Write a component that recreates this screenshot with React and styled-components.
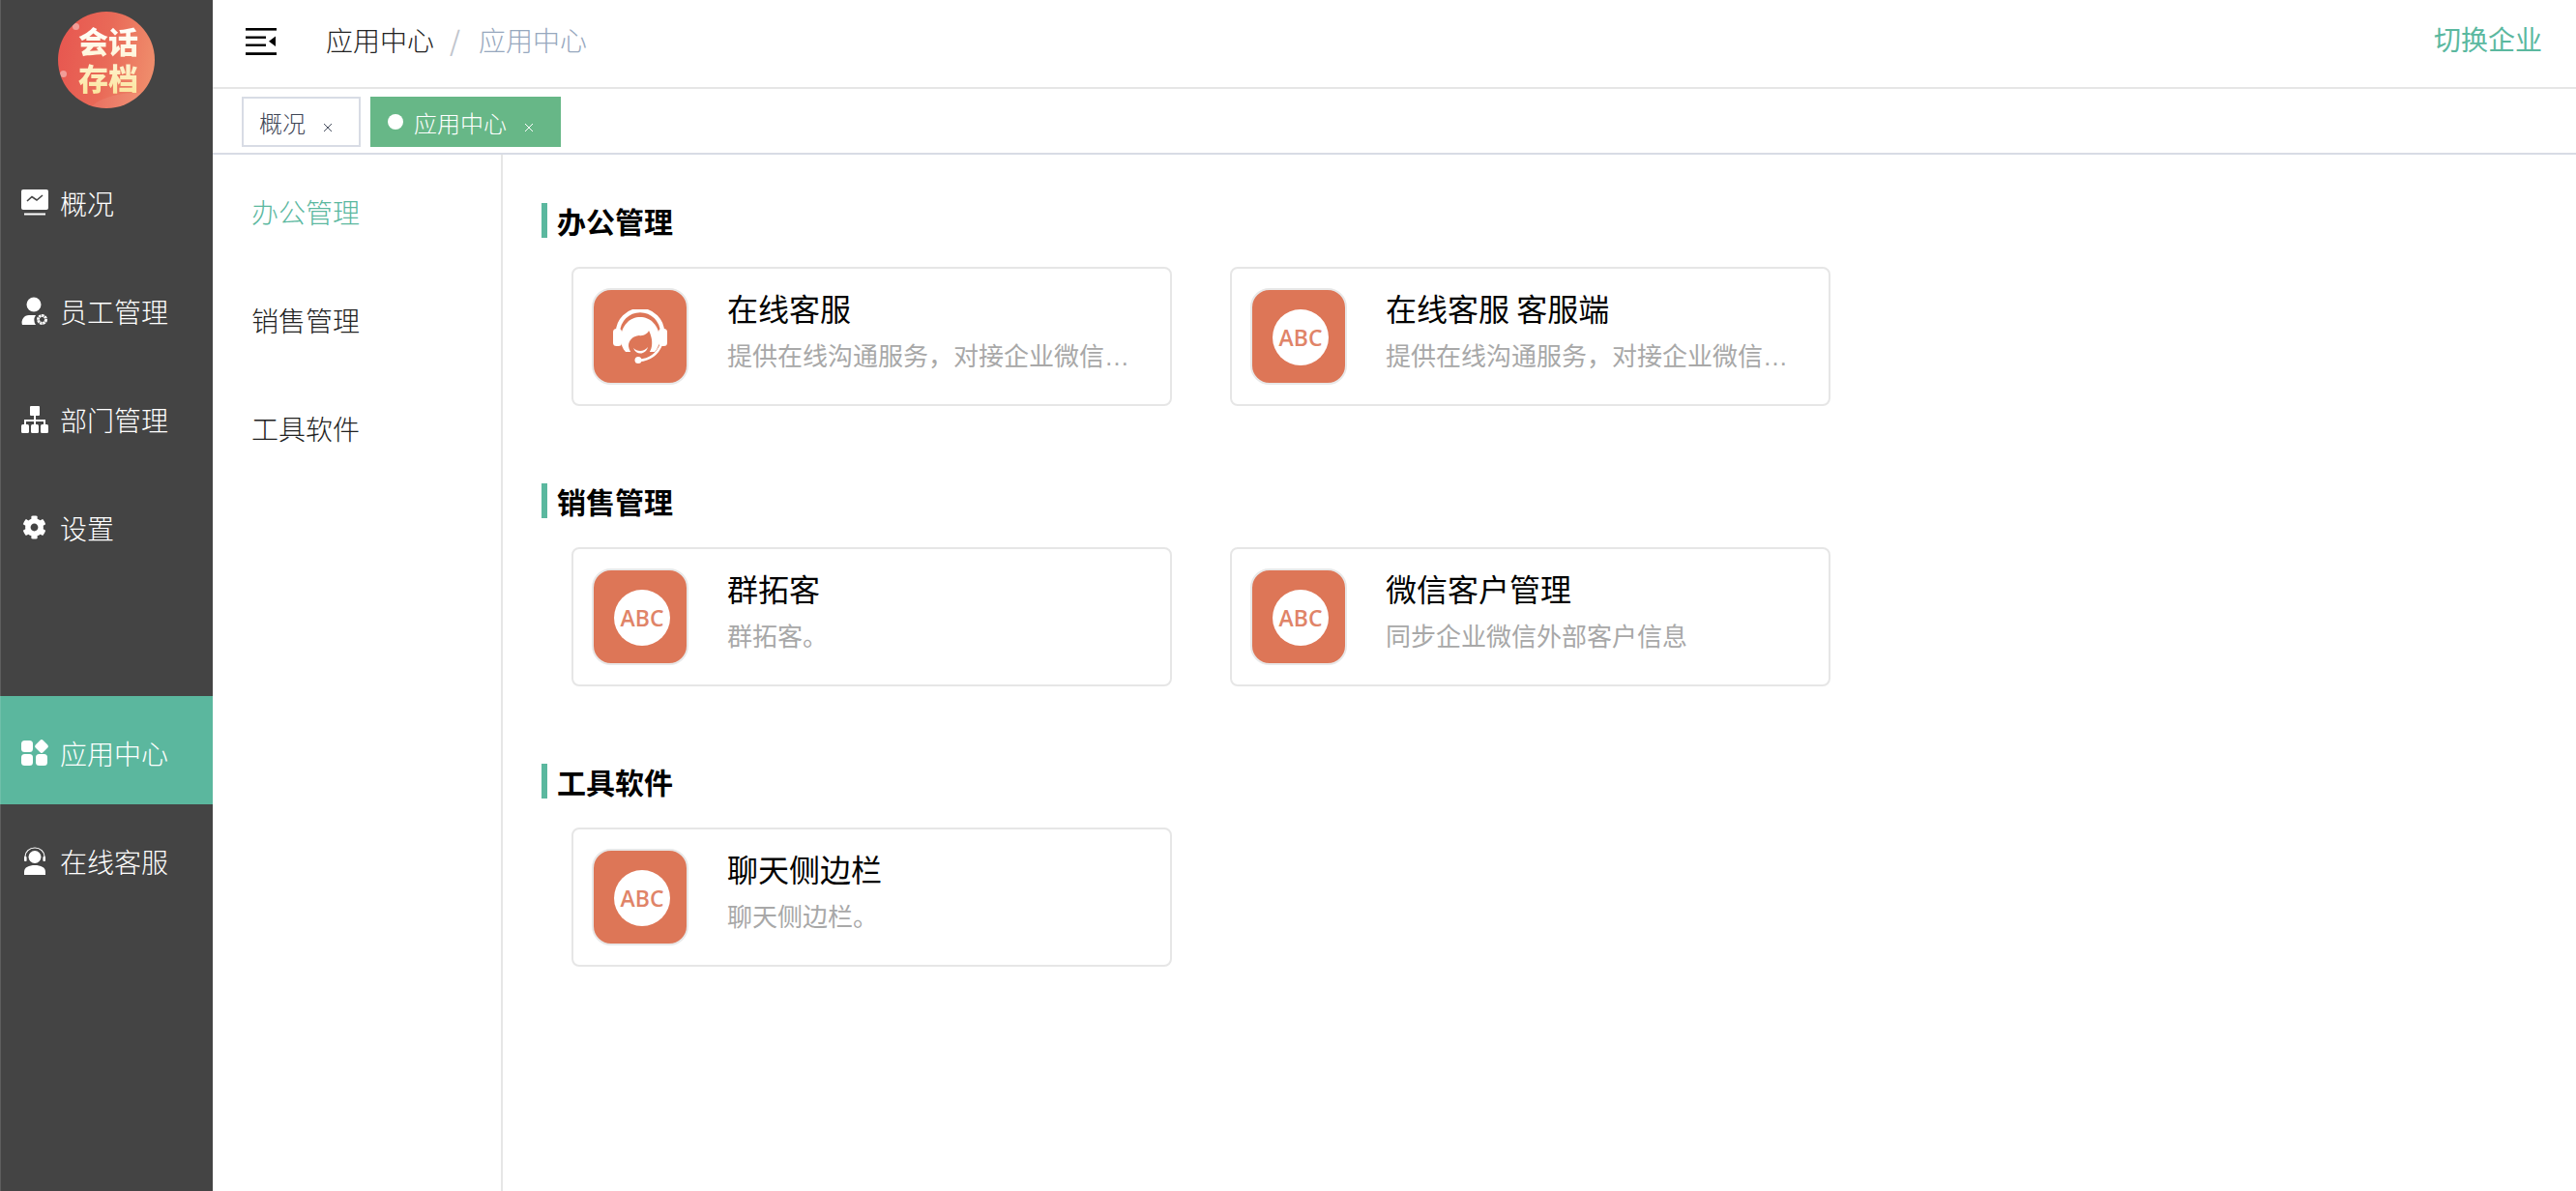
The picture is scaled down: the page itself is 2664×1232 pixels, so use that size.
import React from "react";
import styled, { createGlobalStyle } from "styled-components";
import { FaCog } from "react-icons/fa";

const Global = createGlobalStyle`
  html, body { margin: 0; padding: 0; background: #fff; }
  * { box-sizing: border-box; }
  body { font-family: "Noto Sans CJK SC", "Noto Sans", sans-serif; }
`;

const Page = styled.div`
  display: flex;
  width: 2664px;
  height: 1232px;
  overflow: hidden;
`;

const Sidebar = styled.aside`
  width: 220px;
  flex: none;
  background: #444444;
  border-left: 1px solid #5e5e5e;
  display: flex;
  flex-direction: column;
`;

const LogoWrap = styled.div`
  height: 151px;
  padding: 12px 0 0 59px;
`;

const Logo = styled.div`
  position: relative;
  width: 100px;
  height: 100px;
  border-radius: 50%;
  overflow: hidden;
  background: linear-gradient(100deg, #e7554f 0%, #e96a58 50%, #f0936f 100%);
  display: flex;
  align-items: center;
  justify-content: center;
  padding: 0 0 3px 4px;
  &::after {
    content: "";
    position: absolute;
    left: 30px;
    bottom: -34px;
    width: 100px;
    height: 50px;
    border-radius: 50%;
    background: rgba(255, 255, 255, 0.07);
  }
`;

const LogoDot = styled.span`
  position: absolute;
  left: ${(p) => p.$x}px;
  top: ${(p) => p.$y}px;
  width: 7px;
  height: 7px;
  border-radius: 50%;
  background: rgba(255, 255, 255, 0.4);
`;

const LogoText = styled.div`
  position: relative;
  z-index: 1;
  width: 64px;
  font-size: 31px;
  line-height: 38px;
  font-weight: 900;
  text-align: center;
  background: linear-gradient(180deg, #ffffff 0%, #fff6dc 45%, #fbe49a 100%);
  -webkit-background-clip: text;
  background-clip: text;
  color: transparent;
`;

const NavList = styled.nav`
  display: flex;
  flex-direction: column;
`;

const NavItem = styled.div`
  height: 112px;
  padding: 5px 0 0 20px;
  display: flex;
  align-items: center;
  gap: 12px;
  color: #fff;
  font-size: 28px;
  font-weight: 300;
`;

const ActiveNavItem = styled(NavItem)`
  background: #5bb79e;
  margin-top: ${(p) => p.$gap}px;
  margin-left: -1px;
  padding-left: 21px;
  box-shadow: inset 1px 0 0 rgba(255, 255, 255, 0.12);
`;

const NavIcon = styled.span`
  width: 29px;
  height: 29px;
  flex: none;
  display: flex;
  align-items: center;
  justify-content: center;
  color: #fff;
  svg { display: block; }
`;

const Main = styled.div`
  flex: 1;
  min-width: 0;
  display: flex;
  flex-direction: column;
`;

const Header = styled.header`
  height: 92px;
  flex: none;
  border-bottom: 2px solid #e6e6e6;
  padding: 0 35px 8px 34px;
  display: flex;
  align-items: center;
`;

const Burger = styled.div`
  width: 32px;
  height: 28px;
  margin: 4px 51px 0 0;
  svg { display: block; }
`;

const Crumb = styled.span`
  font-size: 28px;
  font-weight: 300;
  color: ${(p) => (p.$muted ? "#97a8be" : "#222")};
`;

const CrumbSep = styled.span`
  font-size: 28px;
  color: #c0c4cc;
  margin: 0 19px 0 16px;
  font-weight: 400;
`;

const Switch = styled.span`
  margin: 0 0 2px auto;
  color: #5bb89f;
  font-size: 28px;
  font-weight: 400;
`;

const Tabs = styled.div`
  height: 68px;
  flex: none;
  border-bottom: 2px solid #d8dce5;
  padding: 8px 0 0 30px;
  display: flex;
  align-items: flex-start;
  gap: 10px;
`;

const Tab = styled.div`
  height: 52px;
  display: flex;
  align-items: center;
  font-size: 24px;
  font-weight: 300;
  padding: ${(p) => (p.$active ? "0 0 0 18px" : "0 0 0 16px")};
  width: ${(p) => (p.$active ? "197px" : "123px")};
  background: ${(p) => (p.$active ? "#67b787" : "#fff")};
  color: ${(p) => (p.$active ? "#fff" : "#3f4656")};
  border: ${(p) => (p.$active ? "none" : "2px solid #d8dce5")};
`;

const TabDot = styled.span`
  width: 16px;
  height: 16px;
  border-radius: 50%;
  background: #fff;
  margin-right: 11px;
  flex: none;
`;

const TabClose = styled.span`
  width: 12px;
  height: 12px;
  margin-left: 17px;
  margin-top: 12px;
  svg { display: block; }
`;

const Body = styled.div`
  flex: 1;
  min-height: 0;
  display: flex;
`;

const SubMenu = styled.div`
  width: 300px;
  flex: none;
  border-right: 2px solid #e6e6e6;
  padding: 3px 0 0 40px;
`;

const SubItem = styled.div`
  height: 112px;
  display: flex;
  align-items: center;
  font-size: 28px;
  font-weight: 300;
  color: ${(p) => (p.$active ? "#5bb89f" : "#222")};
`;

const Content = styled.div`
  flex: 1;
  padding: 50px 0 0 40px;
`;

const Section = styled.section`
  margin-bottom: 80px;
`;

const Heading = styled.h2`
  margin: 0 0 30px;
  height: 36px;
  border-left: 6px solid #5bb89f;
  padding-left: 10px;
  font-size: 30px;
  line-height: 36px;
  font-weight: 700;
  color: #000;
`;

const CardRow = styled.div`
  display: flex;
  gap: 60px;
  padding-left: 31px;
`;

const Card = styled.div`
  width: 621px;
  height: 144px;
  border: 2px solid #e6e6e6;
  border-radius: 8px;
  padding: 20px 0 0 19px;
  display: flex;
  align-items: flex-start;
  background: #fff;
`;

const AppIcon = styled.div`
  width: 100px;
  height: 100px;
  flex: none;
  border: 2px solid #e8e8e8;
  border-radius: 20px;
  background: #dd7657;
  display: flex;
  align-items: center;
  justify-content: center;
  margin-right: 40px;
  svg { display: block; }
`;

const AbcBadge = styled.div`
  width: 58px;
  height: 58px;
  margin: 2px 0 0 4px;
  border-radius: 50%;
  background: #fff;
  color: #e08468;
  display: flex;
  align-items: center;
  justify-content: center;
  font-family: "Open Sans", "Noto Sans", sans-serif;
  font-size: 23px;
  font-weight: 600;
`;

const CardText = styled.div`
  width: 440px;
  min-width: 0;
`;

const CardTitle = styled.div`
  font-size: 32px;
  line-height: 44px;
  font-weight: 400;
  color: #000;
  margin-top: -2px;
`;

const CardDesc = styled.div`
  font-family: "Liberation Sans", "Noto Sans CJK SC", sans-serif;
  font-size: 26px;
  line-height: 40px;
  margin-top: 9px;
  font-weight: 400;
  color: #a8a8a8;
  white-space: nowrap;
`;

const MonitorIcon = () => (
  <svg width="28" height="28" viewBox="0 0 28 28">
    <rect x="0" y="0" width="28" height="21" rx="2" fill="#fff" />
    <path d="M6 12 L11 7.5 L16 11 L22 6" fill="none" stroke="#444" strokeWidth="1.6" />
    <rect x="3" y="24.5" width="22" height="2" fill="#fff" />
  </svg>
);

const StaffIcon = () => (
  <svg width="28" height="30" viewBox="0 0 28 30">
    <circle cx="13" cy="8" r="7.5" fill="#fff" />
    <path d="M1 29 A 7.5 7.5 0 0 1 8 19 H15 A 9 9 0 0 0 15 29 Z" fill="#fff" />
    <circle cx="21.5" cy="23.5" r="4" fill="none" stroke="#fff" strokeWidth="3" strokeDasharray="2.4 0.6" />
  </svg>
);

const OrgIcon = () => (
  <svg width="28" height="28" viewBox="0 0 28 28" fill="#fff">
    <rect x="9" y="0" width="10" height="10" rx="1" />
    <rect x="13" y="10" width="2" height="9" />
    <rect x="4" y="14" width="20" height="2" />
    <rect x="3" y="14" width="2" height="6" />
    <rect x="23" y="14" width="2" height="6" />
    <rect x="0" y="19" width="8" height="9" rx="1.5" />
    <rect x="10" y="19" width="8" height="9" rx="1.5" />
    <rect x="20" y="19" width="8" height="9" rx="1.5" />
  </svg>
);

const AppsIcon = () => (
  <svg width="28" height="28" viewBox="0 0 28 28" fill="#fff">
    <rect x="0" y="1" width="12" height="12" rx="3.5" />
    <rect x="0" y="15" width="12" height="12" rx="3.5" />
    <rect x="15" y="15" width="12" height="12" rx="3.5" />
    <rect x="15.5" y="1.5" width="11" height="11" rx="2.5" transform="rotate(45 21 7)" />
  </svg>
);

const ServiceIcon = () => (
  <svg width="24" height="30" viewBox="0 0 24 30">
    <circle cx="12" cy="10.5" r="6.5" fill="#fff" />
    <path d="M2 13 V10 A10 9 0 0 1 22 10 V13" fill="none" stroke="#fff" strokeWidth="1.2" />
    <rect x="1" y="10" width="2.6" height="5" rx="1" fill="#fff" />
    <rect x="20.4" y="10" width="2.6" height="5" rx="1" fill="#fff" />
    <path d="M1 29 V26 C1 21 6 19 12 19 C18 19 23 21 23 26 V29 Z" fill="#fff" />
  </svg>
);

const BurgerIcon = () => (
  <svg width="32" height="28" viewBox="0 0 32 28" fill="#000">
    <rect x="0" y="0" width="32" height="2.6" />
    <rect x="0" y="8.5" width="21" height="2.4" />
    <rect x="0" y="16.5" width="21" height="2.4" />
    <rect x="0" y="25.2" width="32" height="2.8" />
    <path d="M31 8.5 V19 L24 13.7 Z" />
  </svg>
);

const CloseIcon = ({ color }) => (
  <svg width="12" height="12" viewBox="0 0 12 12">
    <path d="M2 2 L10 10 M10 2 L2 10" stroke={color} strokeWidth="1" fill="none" />
  </svg>
);

const HeadsetIcon = () => (
  <svg width="56" height="56" viewBox="0 0 56 56" fill="#fff">
    <path d="M5 24 A23 23 0 0 1 51 24" fill="none" stroke="#fff" strokeWidth="4.4" />
    <rect x="0" y="20" width="9" height="18" rx="3.5" />
    <rect x="47" y="20" width="9" height="18" rx="3.5" />
    <path d="M8 31 C8 16 18 8 28 8 C38 8 48 16 48 31 C48 36 46 41 43 44 L13 44 C10 41 8 36 8 31 Z" />
    <path
      fill="#dd7657"
      d="M16 38 C16 32 20 28 27 27 C31 28 36 25 37 22 C39 26 41 32 40 38 C39 45 34 50 28 50 C22 50 17 45 16 38 Z"
    />
    <path d="M21 40 C25 44 32 44 36 39 C34 47 24 48 21 40 Z" />
    <path d="M50 36 C46 46 38 52 27 53" fill="none" stroke="#fff" strokeWidth="2.6" />
    <circle cx="26" cy="52.5" r="3.5" />
  </svg>
);

const navTop = [
  { label: "概况", icon: <MonitorIcon /> },
  { label: "员工管理", icon: <StaffIcon /> },
  { label: "部门管理", icon: <OrgIcon /> },
  { label: "设置", icon: <FaCog size={25} /> },
];

const sections = [
  {
    title: "办公管理",
    cards: [
      { title: "在线客服", desc: "提供在线沟通服务，对接企业微信…", headset: true },
      { title: "在线客服 客服端", desc: "提供在线沟通服务，对接企业微信…" },
    ],
  },
  {
    title: "销售管理",
    cards: [
      { title: "群拓客", desc: "群拓客。" },
      { title: "微信客户管理", desc: "同步企业微信外部客户信息" },
    ],
  },
  {
    title: "工具软件",
    cards: [{ title: "聊天侧边栏", desc: "聊天侧边栏。" }],
  },
];

export default function App() {
  return (
    <>
      <Global />
      <Page>
        <Sidebar>
          <LogoWrap>
            <Logo>
              <LogoDot $x={15} $y={12} />
              <LogoDot $x={2} $y={61} />
              <LogoText>会话存档</LogoText>
            </Logo>
          </LogoWrap>
          <NavList>
            {navTop.map((n) => (
              <NavItem key={n.label}>
                <NavIcon>{n.icon}</NavIcon>
                {n.label}
              </NavItem>
            ))}
            <ActiveNavItem $gap={121}>
              <NavIcon><AppsIcon /></NavIcon>
              应用中心
            </ActiveNavItem>
            <NavItem>
              <NavIcon><ServiceIcon /></NavIcon>
              在线客服
            </NavItem>
          </NavList>
        </Sidebar>
        <Main>
          <Header>
            <Burger><BurgerIcon /></Burger>
            <Crumb>应用中心</Crumb>
            <CrumbSep>/</CrumbSep>
            <Crumb $muted>应用中心</Crumb>
            <Switch>切换企业</Switch>
          </Header>
          <Tabs>
            <Tab>
              概况
              <TabClose><CloseIcon color="#495060" /></TabClose>
            </Tab>
            <Tab $active>
              <TabDot />
              应用中心
              <TabClose><CloseIcon color="#fff" /></TabClose>
            </Tab>
          </Tabs>
          <Body>
            <SubMenu>
              <SubItem $active>办公管理</SubItem>
              <SubItem>销售管理</SubItem>
              <SubItem>工具软件</SubItem>
            </SubMenu>
            <Content>
              {sections.map((s) => (
                <Section key={s.title}>
                  <Heading>{s.title}</Heading>
                  <CardRow>
                    {s.cards.map((c) => (
                      <Card key={c.title}>
                        <AppIcon>
                          {c.headset ? <HeadsetIcon /> : <AbcBadge>ABC</AbcBadge>}
                        </AppIcon>
                        <CardText>
                          <CardTitle>{c.title}</CardTitle>
                          <CardDesc>{c.desc}</CardDesc>
                        </CardText>
                      </Card>
                    ))}
                  </CardRow>
                </Section>
              ))}
            </Content>
          </Body>
        </Main>
      </Page>
    </>
  );
}
